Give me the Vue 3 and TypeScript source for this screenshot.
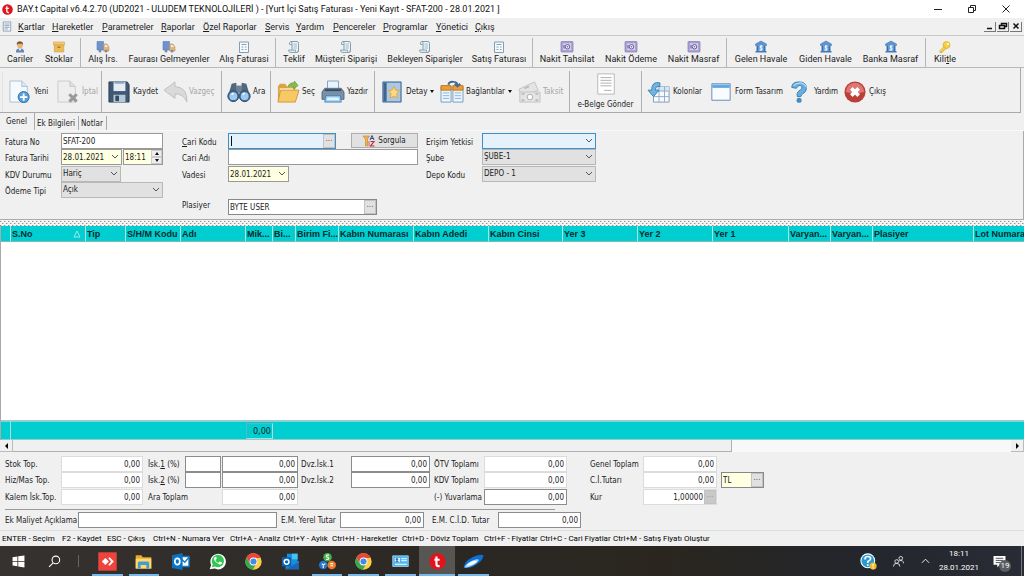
<script setup lang="ts">
import { ref } from 'vue'

interface Item { label: string; icon?: string; w: number; key?: number; off?: boolean; more?: boolean; tall?: boolean }

const menu: Item[] = [
  { label: 'Kartlar', w: 34 }, { label: 'Hareketler', w: 50 }, { label: 'Parametreler', w: 59 },
  { label: 'Raporlar', w: 42 }, { label: 'Özel Raporlar', w: 62 }, { label: 'Servis', w: 31 },
  { label: 'Yardım', w: 37 }, { label: 'Pencereler', w: 50 }, { label: 'Programlar', w: 53 },
  { label: 'Yönetici', w: 39 }, { label: 'Çıkış', w: 24 },
]

const shortcuts: Item[][] = [
  [{ label: 'Cariler', icon: 'person', w: 40 }, { label: 'Stoklar', icon: 'box', w: 38 }],
  [{ label: 'Alış İrs.', icon: 'truck', w: 44 }, { label: 'Faurası Gelmeyenler', icon: 'truck', w: 88 }, { label: 'Alış Faturasi', icon: 'bill', w: 62 }],
  [{ label: 'Teklif', icon: 'scroll', w: 36 }, { label: 'Müşteri Siparişi', icon: 'scroll', w: 68 }, { label: 'Bekleyen Siparişler', icon: 'scroll', w: 90 }, { label: 'Satış Faturası', icon: 'bill', w: 58 }],
  [{ label: 'Nakit Tahsilat', icon: 'safe', w: 68 }, { label: 'Nakit Ödeme', icon: 'safe', w: 60 }, { label: 'Nakit Masraf', icon: 'safe', w: 65 }],
  [{ label: 'Gelen Havale', icon: 'bank', w: 68 }, { label: 'Giden Havale', icon: 'bank', w: 61 }, { label: 'Banka Masraf', icon: 'bank', w: 69 }],
  [{ label: 'Kilitle', icon: 'key', w: 38, key: 4 }],
]

const actions: Item[][] = [
  [{ label: 'Yeni', icon: 'new', w: 48 }, { label: 'İptal', icon: 'cancel', w: 44, off: true }],
  [{ label: 'Kaydet', icon: 'save', w: 56 }, { label: 'Vazgeç', icon: 'undo', w: 57, off: true }],
  [{ label: 'Ara', icon: 'find', w: 42 }],
  [{ label: 'Seç', icon: 'open', w: 45 }, { label: 'Yazdır', icon: 'print', w: 52 }],
  [{ label: 'Detay', icon: 'book', w: 60, more: true }, { label: 'Bağlantılar', icon: 'links', w: 77, more: true }, { label: 'Taksit', icon: 'cash', w: 51, off: true }],
  [{ label: 'e-Belge Gönder', icon: 'doc', w: 71, tall: true }],
  [{ label: 'Kolonlar', icon: 'columns', w: 62 }, { label: 'Form Tasarım', icon: 'window', w: 79 }, { label: 'Yardım', icon: 'help', w: 55 }, { label: 'Çıkış', icon: 'exit', w: 48 }],
]

const columns = [
  { t: '', w: 10 }, { t: 'S.No', w: 75 }, { t: 'Tip', w: 40 }, { t: 'S/H/M Kodu', w: 55 }, { t: 'Adı', w: 65 }, { t: 'Mik...', w: 27 },
  { t: 'Bi...', w: 23 }, { t: 'Birim Fi...', w: 43 }, { t: 'Kabın Numarası', w: 75 }, { t: 'Kabın Adedi', w: 75 }, { t: 'Kabın Cinsi', w: 74 },
  { t: 'Yer 3', w: 75 }, { t: 'Yer 2', w: 75 }, { t: 'Yer 1', w: 76 }, { t: 'Varyan...', w: 42 }, { t: 'Varyan...', w: 42 },
  { t: 'Plasiyer', w: 101 }, { t: 'Lot Numara', w: 0 },
]

const hints: Item[] = [
  { label: 'ENTER - Seçim', w: 60 }, { label: 'F2 - Kaydet', w: 45 }, { label: 'ESC - Çıkış', w: 46 }, { label: 'Ctrl+N - Numara Ver', w: 77 },
  { label: 'Ctrl+A - Analiz', w: 53 }, { label: 'Ctrl+Y - Aylık', w: 49 }, { label: 'Ctrl+H - Hareketler', w: 70 }, { label: 'Ctrl+D - Döviz Toplam', w: 82 },
  { label: 'Ctrl+F - Fiyatlar', w: 56 }, { label: 'Ctrl+C - Cari Fiyatlar', w: 73 }, { label: 'Ctrl+M - Satış Fiyatı Oluştur', w: 96 },
]

const tasks = [
  { n: 'AnyDesk', icon: 'anydesk', open: true }, { n: 'Dosya Gezgini', icon: 'explorer', open: true }, { n: 'Outlook 2013', icon: 'outlook' },
  { n: 'WhatsApp', icon: 'whatsapp' }, { n: 'Chrome', icon: 'chrome' }, { n: 'Outlook', icon: 'mail' }, { n: 'Döviz', icon: 'coins', open: true },
  { n: 'Chrome 2', icon: 'chrome', open: true }, { n: 'Kartvizit', icon: 'card', open: true }, { n: 'BAY.t', icon: 'bayt', open: true, on: true },
  { n: 'Disk', icon: 'swoosh', open: true },
]

const tabs = ['Genel', 'Ek Bilgileri', 'Notlar']
const tab = ref('Genel')

// Drawings on a 24 x 24 canvas
const icons: Record<string, string> = {
  bayt: '<circle cx="12" cy="12" r="11.5" fill="#e3131b"/><path d="M10.5 5v11q0 2.500 2.500 2.500h2M7.500 9.500h7.500" fill="none" stroke="#fff" stroke-width="3"/>',
  sheet: '<path d="M3 1h18v22H3z" fill="#f5f9fc" stroke="#8494a5" stroke-width="2"/><path d="M6 6h12M6 10h12M6 14h12M6 18h8" stroke="#7895b8" stroke-width="2"/>',
  person: '<path d="M4 23v-3q0-4 5-5h6q5 1 5 5v3z" fill="#6087bb"/><path d="M9 15l3 5 3-5z" fill="#fff"/><ellipse cx="12" cy="8" rx="5.500" ry="7" fill="#e8b475"/><path d="M6 9Q4 1 11 1q8-1 7 8l-2-4q-5 1-8 0z" fill="#755031"/>',
  box: '<path d="M1 2h22v6H1z" fill="#f5ca70" stroke="#c4953c"/><path d="M2.500 8h19v14h-19z" fill="#edbc59" stroke="#c4953c"/><path d="M9 11h6v3H9z" fill="#aa7a2a"/>',
  truck: '<path d="M0 1h13v17H0z" fill="#6d93d0" stroke="#4b70ac"/><path d="M13 6h7l4 6v8H13z" fill="#e9b476" stroke="#a88759"/><path d="M16 8h3l3 4h-6z" fill="#e6f2fc"/><circle cx="6" cy="20" r="3" fill="#7d8ba5"/><circle cx="18" cy="20" r="3" fill="#7d8ba5"/>',
  bill: '<path d="M3 2h18v21H3z" fill="#f4fafd" stroke="#849eb0" stroke-width="2"/><path d="M7 7h10M7 12h4M14 12h3M7 17h4M14 17h3" stroke="#82a5ba" stroke-width="2"/>',
  scroll: '<path d="M8 18V4q0-3-3-3h13q3 0 3 4v14" fill="#eef7fb" stroke="#849bab" stroke-width="2"/><path d="M5 1Q2 2 3 7h5M1 18h14v3q1 3 4 1l2-4v3q-1 2-4 2H4q-3-1-3-5z" fill="#d8e8ef" stroke="#849bab" stroke-width="1.700"/><path d="M11 6h7M11 10h7M11 14h7" stroke="#82a5ba" stroke-width="1.500"/>',
  safe: '<rect x="0" y="1" width="24" height="21" rx="1" fill="#a9a0cf" stroke="#8a80b8" stroke-width="1.500"/><rect x="3" y="4" width="18" height="15" fill="#d6d0ee" stroke="#9c92c6"/><circle cx="13" cy="11.500" r="4.500" fill="#eeeaff" stroke="#685b9b" stroke-width="2"/><circle cx="13" cy="11.500" r="1.500" fill="#685b9b"/><path d="M6 8v7" stroke="#5e5390" stroke-width="2"/>',
  bank: '<path d="M12 0l11 6v3H1V6z" fill="#5d94d3" stroke="#316cae"/><path d="M3 9h18v11H3z" fill="#76a5d9"/><path d="M1 20h22v3H1z" fill="#4379ba"/><path d="M5 9v11M19 9v11" stroke="#3871b2" stroke-width="3"/><path d="M15 10h-4q-2 3 1 3.500 4 1 1 4.500H9M12 8v12" fill="none" stroke="#fff" stroke-width="1.700"/>',
  key: '<circle cx="15" cy="8" r="7" fill="#f6d242" stroke="#c29a21"/><path d="M10 11l4 4L6 23H2v-4z" fill="#f4c934" stroke="#b98f1e"/><circle cx="18" cy="6" r="2" fill="#fff"/><path d="M3 20l8-8" stroke="#fff0a0"/>',
  new: '<path d="M1 0h13l6 6v17H1z" fill="#f5fafe" stroke="#a7bed1"/><path d="M14 0v6h6" fill="#d9e8f4" stroke="#a7bed1"/><circle cx="16" cy="17.500" r="6" fill="#5a9ed8" stroke="#286da9"/><path d="M16 13.500v8M12 17.500h8" stroke="#fff" stroke-width="2"/>',
  cancel: '<path d="M1 0h13l6 6v17H1z" fill="#eee" stroke="#c9c9c9"/><path d="M14 0v6h6" fill="#ddd" stroke="#c9c9c9"/><path d="M13.500 14.500l8 8M21.500 14.500l-8 8" stroke="#999" stroke-width="3.300"/>',
  save: '<path d="M1 1h20l2 3v19H1z" fill="#3f5873" stroke="#2a4057"/><path d="M6 1h13v10H6z" fill="#e6edf4"/><path d="M7 1h11v2H7z" fill="#8aa8c8"/><path d="M6 15h13v8H6z" fill="#b8c7d4"/><path d="M8 16h4v6H8z" fill="#304b69"/>',
  undo: '<path d="M0 10l12-9v5q14 1 13 17-4-9-13-9v5z" fill="#dadada" stroke="#bdbdbd"/>',
  find: '<path d="M4 3l5-1 1 11H1zM20 3l-5-1-1 11h9z" fill="#53677c"/><path d="M9 5h6v8H9z" fill="#6d8194"/><circle cx="5.800" cy="16.500" r="6" fill="#42698f" stroke="#33506d"/><circle cx="18.200" cy="16.500" r="6" fill="#42698f" stroke="#33506d"/><circle cx="5.800" cy="16.500" r="4.300" fill="#9ccaf1"/><circle cx="18.200" cy="16.500" r="4.300" fill="#9ccaf1"/><path d="M4 15l2-2M16 15l2-2" stroke="#fff" stroke-width="1.500"/>',
  open: '<path d="M1 6l2-3h6l2 3h9v16H1z" fill="#dca440"/><path d="M3 8h16v10H3z" fill="#fff4cc"/><path d="M4 10h20l-4 13H1z" fill="#f6c965" stroke="#cf9434"/><path d="M12 6q2-5 7-4V0l4 5-5 4V6q-3-1-6 0z" fill="#84bd46" stroke="#598d2b" stroke-width=".6"/>',
  print: '<path d="M6 0h12v11H6z" fill="#eaf4fc" stroke="#809db8"/><path d="M3 8h18l3 4v8H0v-8z" fill="#7b8fa5" stroke="#4f6880"/><path d="M3 10h18" stroke="#334a62" stroke-width="2"/><path d="M4 16h16l1 7H3z" fill="#99caf0" stroke="#4684b5"/><path d="M6 18h12l1 3H5z" fill="#e1f4ff"/>',
  book: '<path d="M2 1h20v22H2z" fill="#6491bd" stroke="#4c7296"/><path d="M6 2h15v20H6z" fill="#abc8e0"/><path d="M3 2h3v20H3z" fill="#40668d"/><path d="M14 6l2 4 4 .600-3 3 .800 5-3.800-2-4 2 1-5-3-3 4-.600z" fill="#ffda79" stroke="#dfa24a"/>',
  links: '<path d="M0 6h11v17H0zM13 6h11v17H13z" fill="#eef6fd" stroke="#6c9ac0"/><path d="M0 5h11v5H0zM13 5h11v5H13z" fill="#ef9d32" stroke="#ba7623"/><path d="M2 13h7M2 16h7M2 19h7M15 13h7M15 16h7M15 19h7" stroke="#83afd3"/><path d="M8 4Q9 0 14 1q4 0 4 4M15 3l3 3 3-3" fill="none" stroke="#426b95" stroke-width="2"/>',
  cash: '<g fill="#e4e4e4" stroke="#c2c2c2"><path d="M1 9L18 1l4 9L4 17z"/><path d="M2 12h22v11H2z"/></g><circle cx="13" cy="17.500" r="3" fill="#fff" stroke="#aaa"/><path d="M4 14h3M19 14h3M4 21h3M19 21h3M7 8l5-2" stroke="#bbb" stroke-width="2"/>',
  doc: '<path d="M3 1h18v22H3z" fill="#fff" stroke="#b3b3b3"/><path d="M6 5h12M6 8h12M6 11h12M6 14h12M10 19h8" stroke="#aaa"/>',
  columns: '<path d="M6 6h17v17H6z" fill="#f8fbfe" stroke="#7897bb"/><path d="M6 6h17v5H6z" fill="#d6e4f4"/><path d="M6 11h17M6 17h17M12 6v17M18 6v17" stroke="#8ba9cb"/><path d="M13 2Q4 0 4 10H0l6 7 6-7H8q0-5 5-4z" fill="#70b4df" stroke="#357fae"/>',
  window: '<path d="M2 3h20v18H2z" fill="#f8fbff" stroke="#6485b1"/><path d="M2.500 3.500h19v4h-19z" fill="#5fa5de"/><path d="M3 4h18" stroke="#a4d1f1"/>',
  help: '<path d="M3 7Q3 1 11 1q8 0 8 7 0 4-4 6-2 1-2 3H9q-1-5 3-7 3-2 2-4-3-3-6 2z" fill="#69aede" stroke="#357bad"/><path d="M5 5q3-3 8-3 5 1 6 5" fill="none" stroke="#d8f0ff"/><circle cx="11" cy="21" r="2.800" fill="#438fc3"/>',
  exit: '<circle cx="12" cy="12" r="11.500" fill="#bb3f39"/><path d="M2 12a10 10 0 0 1 20 0q-10 3-20 0z" fill="#dc7871"/><path d="M8 8l8 8M16 8l-8 8" stroke="#fff" stroke-width="4"/>',
  query: '<path d="M0 2h13l-4 6v14H5V9z" fill="#f0b347" stroke="#b7732b"/><path d="M12 22V12" stroke="#cd654f" stroke-width="2"/><path d="M14 10l4-9 4 9M15 7h6" stroke="#354c98" fill="none" stroke-width="2"/><path d="M15 13h7l-7 9h8" stroke="#c22b35" fill="none" stroke-width="2.400"/>',
  win: '<path d="M1 4l9-1.300V11H1zM11.500 2.500L23 1v10H11.500zM1 12.500h9v8.300L1 19.500zM11.500 12.500H23V23l-11.500-1.700z" fill="#fff"/>',
  search: '<circle cx="14.500" cy="9" r="7" fill="none" stroke="#fff" stroke-width="2"/><path d="M9.500 14.500L2 22" stroke="#fff" stroke-width="2"/>',
  anydesk: '<path d="M-1-1h26v26H-1z" fill="#ef443b"/><path d="M9 7l5 5-5 5-5-5zM13 7l2-1 6 6-6 6-2-1 4-5z" fill="#fff"/>',
  explorer: '<path d="M1 3h8l2 3h12v16H1z" fill="#e6aa2d"/><path d="M1 8h22v14H1z" fill="#ffd96a"/><path d="M4 22v-8q0-2 2-2h12q2 0 2 2v8h-4v-5H8v5z" fill="#479bd5"/>',
  outlook: '<path d="M12 5h12v14H12z" fill="#fff" stroke="#147ac7" stroke-width="2"/><path d="M12 7l6 6 6-7" fill="none" stroke="#147ac7" stroke-width="2"/><path d="M0 3l15-3v24L0 21z" fill="#0872c4"/><ellipse cx="7.500" cy="12" rx="3.500" ry="4.500" fill="none" stroke="#fff" stroke-width="2.400"/>',
  mail: '<path d="M7 1h15v16H7z" fill="#1490df"/><path d="M14 1h8v8h-8z" fill="#48c3ef"/><path d="M5 11l10 5 9-5v12H5z" fill="#2783d0"/><path d="M5 23l19-10v10z" fill="#1b65b6"/><path d="M0 6h13v13H0z" fill="#0864b3"/><circle cx="6.500" cy="12.500" r="3.400" fill="none" stroke="#fff" stroke-width="2"/>',
  whatsapp: '<path d="M1 23l2-6A11 11 0 1 1 8 22z" fill="#fff"/><path d="M4 20l1.200-4A8.700 8.700 0 1 1 8.500 19z" fill="#31c653"/><path d="M8 6q-3 3 2 7t7 3q2-1 1-3l-3-1-2 2q-3-1-4-4l2-2-1-3z" fill="#fff"/>',
  chrome: '<circle cx="12" cy="12" r="11.500" fill="#ffcd42"/><path d="M2 6.200A11.500 11.500 0 0 1 22.300 7H12L7.500 15z" fill="#e8453c"/><path d="M2 6.200A11.500 11.500 0 0 0 11 23.500L16 15H7z" fill="#34a853"/><circle cx="12" cy="12" r="5.500" fill="#fff"/><circle cx="12" cy="12" r="4.300" fill="#4488ee"/>',
  coins: '<circle cx="12" cy="6" r="6" fill="#43b649"/><circle cx="6" cy="17" r="6" fill="#2777ce"/><circle cx="18" cy="17" r="6" fill="#ee7927"/><path d="M14 3h-3q-2 2 1 3 3 1 1 3h-3M4 15l2 2 3-2M6 17v4M16 15h4M16 18h4" stroke="#fff" fill="none" stroke-width="1.500"/>',
  card: '<path d="M1 4h22v15H1z" fill="#4bb4ef" stroke="#b6e6ff"/><path d="M4 7h7v6H4z" fill="#fff"/><circle cx="7" cy="9" r="2" fill="#3579b8"/><path d="M4 13q3-5 6 0z" fill="#3579b8"/><path d="M13 8h8M13 11h8M4 16h17" stroke="#fff" stroke-width="1.500"/>',
  swoosh: '<path d="M-2 20Q0 8 18 3q9-2 8 2-3 9-15 14-9 4-13 1z" fill="#0f6fd6"/><path d="M-1 20Q4 12 15 9q6-1 4 2-5 7-15 9-3 1-5 0z" fill="#9bd8fb"/><path d="M2 18q5-6 12-7 4 0 2 2-5 4-14 5z" fill="#fff"/>',
  tip: '<circle cx="11" cy="11" r="10.500" fill="#fff"/><circle cx="11" cy="11" r="9" fill="#279bd4"/><path d="M7 9q0-4 4-4t4 3q0 2-4 4v2" stroke="#fff" fill="none" stroke-width="2.300"/><circle cx="11" cy="17" r="1.300" fill="#fff"/><circle cx="18.500" cy="18.500" r="5" fill="#f0b82d"/><path d="M18.500 15v4M18.500 20v2" stroke="#fff" stroke-width="1.500"/>',
  people: '<g fill="none" stroke="#fff" stroke-width="1.700"><circle cx="8" cy="12" r="4"/><path d="M1 23q0-7 7-7t7 7"/><circle cx="17" cy="5" r="4"/><path d="M13 11q9-4 10 5"/></g>',
  note: '<path d="M1 2h22v16H12l-4 5v-5H1z" fill="#fff"/><path d="M5 6h14M5 10h14M5 14h8" stroke="#2c2d33" stroke-width="1.500"/>',
}

const d = ref({ no: 'SFAT-200', date: '28.01.2021', time: '18:11', code: '', name: '', due: '28.01.2021', rep: 'BYTE USER', extra: '' })

const sums = [
  [{ l: 'Stok Top.', v: '0,00' }, { l: 'Hiz/Mas Top.', v: '0,00' }, { l: 'Kalem İsk.Top.', v: '0,00' }],
  [{ l: 'Dvz.İsk.1', v: '0,00', e: true }, { l: 'Dvz.İsk.2', v: '0,00', e: true }],
  [{ l: 'ÖTV Toplamı', v: '0,00' }, { l: 'KDV Toplamı', v: '0,00' }, { l: '(-) Yuvarlama', v: '0,00', e: true }],
]
</script>

<template>
  <div class="app">
    <header class="title">
      <svg class="logo" viewBox="0 0 24 24" v-html="icons.bayt" />
      <span class="caption">BAY.t Capital v6.4.2.70 (UD2021 - ULUDEM TEKNOLOJİLERİ ) - [Yurt İçi Satış Faturası - Yeni Kayıt - SFAT-200 - 28.01.2021 ]</span>
      <div class="winbtns">
        <button aria-label="Simge durumuna küçült"><svg viewBox="0 0 10 10"><path d="M1 5.500h8" /></svg></button>
        <button aria-label="Önceki boyut"><svg viewBox="0 0 10 10"><path d="M1.500 3.500h5v5h-5zM3.500 3.500v-2h5v5h-2" /></svg></button>
        <button aria-label="Kapat"><svg viewBox="0 0 10 10"><path d="M1.500 1.500l7 7M8.500 1.500l-7 7" /></svg></button>
      </div>
    </header>

    <nav class="menu">
      <svg class="sheet" viewBox="0 0 24 24" v-html="icons.sheet" />
      <button v-for="m in menu" :key="m.label" :style="{ width: m.w + 'px' }"><u>{{ m.label[0] }}</u>{{ m.label.slice(1) }}</button>
      <div class="mdi">
        <button aria-label="Küçült"><svg viewBox="0 0 10 8"><path d="M2 6.500h5" /></svg></button>
        <button aria-label="Geri yükle"><svg viewBox="0 0 10 8"><path d="M3.500 3V1.500h5v3H7M1.500 3.500h5v3h-5z" /></svg></button>
        <button aria-label="Pencereyi kapat"><svg viewBox="0 0 10 8"><path d="M2.500 1.500l5 5M7.500 1.500l-5 5" /></svg></button>
      </div>
    </nav>

    <div class="bar small">
      <div v-for="(g, i) in shortcuts" :key="i" class="group">
        <button v-for="b in g" :key="b.label" :style="{ width: b.w + 'px' }">
          <svg viewBox="0 0 24 24" v-html="icons[b.icon!]" />
          <span v-if="b.key">{{ b.label.slice(0, b.key) }}<u>{{ b.label[b.key] }}</u>{{ b.label.slice(b.key + 1) }}</span>
          <span v-else>{{ b.label }}</span>
        </button>
      </div>
    </div>

    <div class="bar big">
      <div v-for="(g, i) in actions" :key="i" class="group" :class="{ flush: g[0].tall }">
        <button v-for="b in g" :key="b.label" :class="{ tall: b.tall }" :disabled="b.off" :style="{ width: b.w + 'px' }">
          <svg viewBox="0 0 24 24" v-html="icons[b.icon!]" />
          <span>{{ b.label }}</span>
          <i v-if="b.more" class="caret" />
        </button>
      </div>
    </div>

    <div class="tabs" role="tablist">
      <button v-for="t in tabs" :key="t" role="tab" :aria-selected="tab === t" :class="{ on: tab === t }" @click="tab = t">{{ t }}</button>
    </div>

    <form class="form" @submit.prevent>
      <div class="fields first">
        <label for="no">Fatura No</label>
        <input id="no" v-model="d.no" class="field">
        <label for="date">Fatura Tarihi</label>
        <div class="pair">
          <div class="combo yellow date">
            <input id="date" v-model="d.date"><button aria-label="Takvim"><svg class="chev" viewBox="0 0 8 6"><path d="M1 1l3 3 3-3" /></svg></button>
          </div>
          <div class="combo yellow time">
            <input v-model="d.time" aria-label="Saat">
            <div class="spin"><button aria-label="Artır"><i class="up" /></button><button aria-label="Azalt"><i class="down" /></button></div>
          </div>
        </div>
        <label for="kdv">KDV Durumu</label>
        <div class="combo grey narrow"><select id="kdv"><option>Hariç</option></select><svg class="chev" viewBox="0 0 8 6"><path d="M1 1l3 3 3-3" /></svg></div>
        <label for="pay">Ödeme Tipi</label>
        <div class="combo grey"><select id="pay"><option>Açık</option></select><svg class="chev" viewBox="0 0 8 6"><path d="M1 1l3 3 3-3" /></svg></div>
      </div>

      <div class="fields second">
        <label for="code"><u>C</u>ari Kodu</label>
        <div class="pair spread">
          <div class="combo focus code"><i class="cursor" /><input id="code" v-model="d.code"><button class="dots" aria-label="Cari seç">...</button></div>
          <button class="query"><svg viewBox="0 0 24 24" v-html="icons.query" />Sorgula</button>
        </div>
        <label for="name">Cari Adı</label>
        <input id="name" v-model="d.name" class="field">
        <label for="due">Vadesi</label>
        <div class="combo yellow date"><input id="due" v-model="d.due"><button aria-label="Vade takvimi"><svg class="chev" viewBox="0 0 8 6"><path d="M1 1l3 3 3-3" /></svg></button></div>
        <label for="rep" class="last rl">Plasiyer</label>
        <div class="combo rep last"><input id="rep" v-model="d.rep"><button class="dots" aria-label="Plasiyer seç">...</button></div>
      </div>

      <div class="fields third">
        <label for="acc">Erişim Yetkisi</label>
        <div class="combo focus"><select id="acc"><option></option></select><svg class="chev" viewBox="0 0 8 6"><path d="M1 1l3 3 3-3" /></svg></div>
        <label for="branch">Şube</label>
        <div class="combo grey"><select id="branch"><option>ŞUBE-1</option></select><svg class="chev" viewBox="0 0 8 6"><path d="M1 1l3 3 3-3" /></svg></div>
        <label for="depot">Depo Kodu</label>
        <div class="combo grey"><select id="depot"><option>DEPO - 1</option></select><svg class="chev" viewBox="0 0 8 6"><path d="M1 1l3 3 3-3" /></svg></div>
      </div>
    </form>

    <div class="splitter" />

    <main class="gridwrap">
      <table class="grid">
        <colgroup><col v-for="(c, i) in columns" :key="i" :style="c.w ? { width: c.w + 'px' } : {}"></colgroup>
        <thead>
          <tr><th v-for="(c, i) in columns" :key="i">{{ c.t }}<svg v-if="i === 1" class="sort" viewBox="0 0 8 8"><path d="M4 1L1 7h6z" /></svg></th></tr>
        </thead>
        <tbody><tr><td :colspan="columns.length" /></tr></tbody>
        <tfoot>
          <tr><td /><td colspan="4" /><td class="sum"><span>0,00</span></td><td :colspan="columns.length - 6" /></tr>
        </tfoot>
      </table>
    </main>

    <div class="scroll">
      <button aria-label="Sola kaydır"><i class="left" /></button>
      <div class="track"><div class="thumb" /></div>
      <button aria-label="Sağa kaydır"><i class="right" /></button>
    </div>

    <section class="totals">
      <div class="cols">
        <div class="sumcol a">
          <template v-for="s in sums[0]" :key="s.l"><label :for="s.l">{{ s.l }}</label><input :id="s.l" class="num" :value="s.v" readonly></template>
        </div>
        <div class="sumcol b">
          <template v-for="n in 2" :key="n">
            <label :for="'isk' + n">İsk.<u>{{ n }}</u> (%)</label><input :id="'isk' + n" class="num edit"><input class="num edit" value="0,00" :aria-label="'İskonto tutarı ' + n">
          </template>
          <label for="sub" class="wide">Ara Toplam</label><input id="sub" class="num" value="0,00" readonly>
        </div>
        <div class="sumcol c">
          <template v-for="s in sums[1]" :key="s.l"><label :for="s.l">{{ s.l }}</label><input :id="s.l" class="num edit" :value="s.v"></template>
        </div>
        <div class="sumcol d">
          <template v-for="s in sums[2]" :key="s.l"><label :for="s.l">{{ s.l }}</label><input :id="s.l" class="num" :class="{ edit: s.e }" :value="s.v"></template>
        </div>
        <div class="sumcol e">
          <label for="gt">Genel Toplam</label><input id="gt" class="num" value="0,00" readonly><span />
          <label for="ci">C.İ.Tutarı</label><input id="ci" class="num" value="0,00" readonly>
          <div class="combo yellow cur"><input value="TL" aria-label="Döviz"><button class="dots" aria-label="Döviz seç">...</button></div>
          <label for="rate">Kur</label><div class="rate"><input id="rate" class="num" value="1,00000" readonly><button class="dots" aria-label="Kur seç" disabled>...</button></div>
        </div>
      </div>
      <hr>
      <div class="extra">
        <label for="ek">Ek Maliyet Açıklama</label><input id="ek" v-model="d.extra" class="num edit text">
        <label for="em1">E.M. Yerel Tutar</label><input id="em1" class="num edit" value="0,00">
        <label for="em2" class="gap">E.M. C.İ.D. Tutar</label><input id="em2" class="num edit" value="0,00">
      </div>
    </section>

    <div class="status"><span v-for="h in hints" :key="h.label" :style="{ width: h.w + 'px' }">{{ h.label }}</span></div>

    <footer class="taskbar">
      <button class="sys" aria-label="Başlat"><svg class="win" viewBox="0 0 24 24" v-html="icons.win" /></button>
      <button class="sys" aria-label="Ara"><svg class="win" viewBox="0 0 24 24" v-html="icons.search" /></button>
      <i class="tsep" />
      <div class="tasks">
        <button v-for="t in tasks" :key="t.n" :aria-label="t.n" :class="{ open: t.open, on: t.on }"><svg viewBox="0 0 24 24" v-html="icons[t.icon]" /></button>
      </div>
      <div class="tray">
        <button class="tip" aria-label="Yardım"><svg viewBox="0 0 24 24" v-html="icons.tip" /></button>
        <button class="ppl" aria-label="Kişiler"><svg viewBox="0 0 24 24" v-html="icons.people" /></button>
        <button class="more" aria-label="Gizli simgeler"><svg viewBox="0 0 10 6"><path d="M1 5l4-4 4 4" /></svg></button>
        <div class="clock"><span>18:11</span><span>28.01.2021</span></div>
        <button class="note" aria-label="Bildirimler"><svg viewBox="0 0 24 24" v-html="icons.note" /><b>19</b></button>
      </div>
    </footer>
  </div>
</template>

<style>
body { margin: 0; }
</style>

<style scoped>
* { box-sizing: border-box; }
.app {
  display: flex; flex-direction: column; min-height: 100vh; overflow: hidden; background: #f0f0f0; color: #1c1c1c;
  font: 8px/12px "DejaVu Sans Condensed", "Liberation Sans", sans-serif; white-space: nowrap;
}
button, input, select { font: inherit; color: inherit; border: 0; padding: 0; margin: 0; background: none; border-radius: 0; min-width: 0; }
button { white-space: nowrap; }
input, select { outline: none; }
svg { display: block; flex: none; overflow: visible; }

.title { display: flex; align-items: center; height: 18px; padding-left: 2px; background: #fff; font: 9px/16px Roboto, sans-serif; color: #111; }
.logo { width: 11px; height: 11px; margin-right: 4px; }
.winbtns { display: flex; margin-left: auto; }
.winbtns button { width: 34px; height: 16px; display: flex; align-items: center; justify-content: center; }
.winbtns svg { width: 10px; height: 10px; margin-right: 3px; fill: none; stroke: #222; stroke-width: 1; }

.menu { display: flex; align-items: center; height: 18px; padding-left: 2px; border-bottom: 1px solid #c9c9c9; font: 9px/14px Roboto, sans-serif; }
.menu .sheet { width: 10px; height: 11px; margin-right: 6px; }
.menu > button { flex: none; text-align: left; }
.mdi { display: flex; gap: 1px; margin-left: auto; padding-right: 2px; }
.mdi button { width: 12px; height: 10px; display: flex; align-items: center; justify-content: center; border: solid #777; border-width: 0 1px 1px 0; }
.mdi svg { width: 10px; height: 8px; fill: none; stroke: #111; stroke-width: 1.5; }

.bar { display: flex; }
.group { display: flex; flex: none; }
.group button { flex: none; display: flex; align-items: center; }
.small { height: 32px; padding-top: 2px; border-bottom: 1px solid #b8b8b8; font: 9px/12px Roboto, sans-serif; }
.small .group { height: 29px; }
.small .group:first-child { padding-right: 2px; }
.small .group:nth-child(3) { padding-right: 4px; }
.small .group + .group { border-left: 1px solid #b5b5b5; }
.small button { flex-direction: column; justify-content: center; }
.small svg { width: 12px; height: 12px; }
.big { height: 45px; padding: 3px 0 0 2px; margin-right: 3px; border-bottom: 1px solid #a9a9a9; border-right: 1px solid #a9a9a9; }
.big .group { padding-left: 6px; border-left: 1px solid #b0b0b0; }
.big .group:first-child { border-color: #e2e2e2; }
.big .flush { padding-left: 0; }
.big button { gap: 3px; }
.big svg { width: 22px; height: 22px; }
.big button:disabled { color: #a5a5a5; }
.big .tall { flex-direction: column; justify-content: center; }
.big .tall svg { height: 24px; }
.caret { width: 0; border: solid transparent; border-width: 3px 2px 0; border-top-color: #111; }

.tabs { display: flex; align-items: flex-end; height: 18px; padding-left: 1px; border-bottom: 1px solid #f8f8f8; }
.tabs button { height: 14px; padding: 1px 3px 0 2px; border-right: 1px solid #aaa; }
.tabs .on { height: 17px; padding: 0 7px 0 5px; }

.form { display: flex; height: 88px; padding: 2px 0 0 5px; border-right: 1px solid #aaa; }
.fields { display: grid; grid-template-rows: 16px 17px 16px 17px 16px; align-content: start; align-items: start; }
.fields label { line-height: 20px; }
.fields .rl { line-height: 14px; }
.first { grid-template-columns: 56px 102px; margin-right: 19px; }
.second { grid-template-columns: 46px 190px; margin-right: 8px; }
.third { grid-template-columns: 56px 114px; }
.last { grid-row: 5; }
.field { width: 100%; height: 16px; padding: 0 1px; background: #fff; border: 1px solid #999; }
.pair { display: flex; gap: 1px; }
.spread { justify-content: space-between; }
.combo { display: flex; align-items: center; height: 16px; border: 1px solid #b8b8b8; background: #fff; }
.combo input { flex: 1; width: 0; height: 100%; padding-left: 1px; }
.combo select { appearance: none; flex: 1; height: 100%; padding-left: 1px; }
.combo button { height: 100%; }
.chev { width: 8px; height: 6px; margin-right: 2px; fill: none; stroke: #555; stroke-width: 1; }
.yellow { background: #ffffe1; border-color: #999; }
.grey { background: #e1e1e1; }
.focus { background: #e5f1fb; border-color: #3c8fc9; }
.narrow { width: 60px; }
.date { width: 61px; }
.time { width: 40px; }
.code { width: 108px; }
.rep { width: 149px; border-color: #888; }
.cursor { width: 1px; height: 10px; margin-left: 2px; background: #111; }
.spin { display: flex; flex-direction: column; width: 11px; height: 100%; }
.spin button { flex: 1; height: 0; display: flex; align-items: center; justify-content: center; background: #eee; border: 1px solid #ccc; }
.up, .down { border: solid transparent; }
.up { border-width: 0 2px 3px; border-bottom-color: #111; }
.down { border-width: 3px 2px 0; border-top-color: #111; }
.combo .dots, .rate .dots { width: 12px; height: 14px; padding-bottom: 4px; background: #e1e1e1; border: 1px solid #c2c2c2; line-height: 8px; text-align: center; color: #555; }
.query { display: flex; align-items: center; justify-content: center; gap: 3px; width: 67px; height: 15px; background: #e1e1e1; border: 1px solid #adadad; }
.query svg { width: 12px; height: 12px; }

.splitter {
  height: 7px; border-top: 1px solid #aaa;
  background:
    repeating-linear-gradient(90deg, #909090 0 1px, #ccc 1px 2px, transparent 2px 4px) 0 1px / 100% 1px no-repeat,
    repeating-linear-gradient(90deg, transparent 0 2px, #909090 2px 3px, #ccc 3px 4px) 0 3px / 100% 1px no-repeat,
    repeating-linear-gradient(90deg, #909090 0 1px, #ccc 1px 2px, transparent 2px 4px) 0 5px / 100% 1px no-repeat,
    #f4f4f4;
}

.gridwrap { display: flex; flex: 1; background: #fff; border-left: 1px solid #aaa; }
.grid { width: 100%; table-layout: fixed; border-collapse: separate; border-spacing: 0; }
.grid th { height: 16px; padding: 0 0 0 1px; overflow: hidden; text-align: left; background: #00ced1; border-right: 1px solid #b5dede; border-bottom: 1px solid #7fb9ba; font: bold 9px/14px "Liberation Sans", sans-serif; color: #0a2a2b; }
.grid th:last-child { border-right: 0; }
.sort { float: right; width: 8px; height: 8px; margin: 3px 4px 0 0; fill: none; stroke: #a5e8e9; }
.grid tbody td { padding: 0; }
.grid tfoot td { height: 20px; padding: 0; background: #00ced1; border-top: 2px solid #8fcfd0; border-bottom: 1px solid #8fcfd0; }
.grid tfoot td:first-child { border-right: 1px solid #a5dfe0; }
.grid tfoot .sum span { display: block; padding-right: 1px; text-align: right; font: 9px/14px "DejaVu Sans Condensed", sans-serif; border: 1px solid #a5dfe0; border-top-color: #5fb5b7; border-left-color: #5fb5b7; }

.scroll { display: flex; height: 12px; background: #f8f8f8; }
.scroll > button { width: 13px; display: flex; align-items: center; justify-content: center; background: #f0f0f0; border: solid #bbb; border-width: 0 1px 1px 0; }
.left, .right { border: solid transparent; }
.left { border-width: 3px 3px 3px 0; border-right-color: #000; }
.right { border-width: 3px 0 3px 3px; border-left-color: #000; }
.track { flex: 1; }
.thumb { width: 72%; height: 100%; border: solid #b0b0b0; border-width: 0 1px 1px 0; background: #f0f0f0; }

.totals { height: 79px; padding: 4px 5px 0; border-bottom: 1px solid #ddd; }
.cols { display: flex; height: 49px; }
.sumcol { display: grid; grid-template-rows: 16px 17px 16px; align-items: start; }
.sumcol label { line-height: 17px; }
.a { grid-template-columns: 56px 82px; margin-right: 5px; }
.b { grid-template-columns: 36px 36px 76px; column-gap: 1px; margin-right: 3px; }
.b .wide { grid-column: span 2; }
.c { grid-template-columns: 50px 79px; margin-right: 4px; }
.d { grid-template-columns: 50px 83px; margin-right: 23px; }
.e { grid-template-columns: 53px 74px 43px; }
.num { width: 100%; height: 16px; padding: 0 2px; text-align: right; background: #fff; border: 1px solid #dcdcdc; }
.edit { border-color: #8c8c8c; }
.text { text-align: left; }
.cur { margin-left: 4px; width: 43px; border-color: #888; }
.rate { display: flex; align-items: center; background: #fff; border: 1px solid #dcdcdc; height: 16px; }
.rate .num { border: 0; height: 100%; flex: 1; width: 0; padding: 0 1px; }
.rate .dots { background: #c9c9c9; color: #999; }
hr { width: 550px; height: 1px; margin: 4px 0 2px; border: 0; background: #999; }
.extra { display: grid; grid-template-columns: 73px 199px 63px 84px 74px 83px; }
.extra label { line-height: 17px; }
.extra label:nth-of-type(2) { padding-left: 4px; }
.extra .gap { padding-left: 8px; }

.status { display: flex; height: 15px; padding-left: 2px; font: 8px/15px Roboto, sans-serif; color: #000; }
.status span { flex: none; }

.taskbar { display: flex; height: 30px; background: linear-gradient(90deg, #35322f, #2b2824 45%, #2a261f 65%, #23262d 85%, #292c34); color: #fff; }
.sys { width: 36px; display: flex; align-items: center; justify-content: center; }
.win { width: 13px; height: 13px; }
.tsep { width: 1px; height: 12px; margin: 9px 10px 0 6px; background: #666; }
.tasks { display: grid; grid-template-columns: repeat(11, 1fr); width: 403px; }
.tasks button { position: relative; display: flex; align-items: center; justify-content: center; }
.tasks svg { width: 17px; height: 17px; }
.tasks .open::after { content: ""; position: absolute; left: 3px; right: 3px; bottom: 0; height: 2px; background: #76b9ed; }
.tasks .on { background: #585653; }
.tasks .on::after { left: 0; right: 0; }
.tray { display: flex; align-items: center; margin-left: auto; margin-right: 2px; border-right: 1px solid #777; }
.tray button { display: flex; align-items: center; justify-content: center; height: 30px; }
.tip { width: 30px; }
.tip svg { width: 17px; height: 17px; }
.ppl { width: 30px; }
.ppl svg { width: 11px; height: 11px; }
.more { width: 24px; }
.more svg { width: 9px; height: 6px; fill: none; stroke: #fff; stroke-width: 1; }
.clock { display: flex; flex-direction: column; width: 44px; text-align: center; font: 8px/14px Roboto, sans-serif; }
.tray .note { position: relative; width: 40px; }
.note svg { width: 13px; height: 13px; margin-right: 4px; }
.note b { position: absolute; left: 18px; top: 14px; width: 12px; height: 12px; border-radius: 6px; background: #5b5d62; font: 8px/12px Roboto, sans-serif; text-align: center; }
</style>
